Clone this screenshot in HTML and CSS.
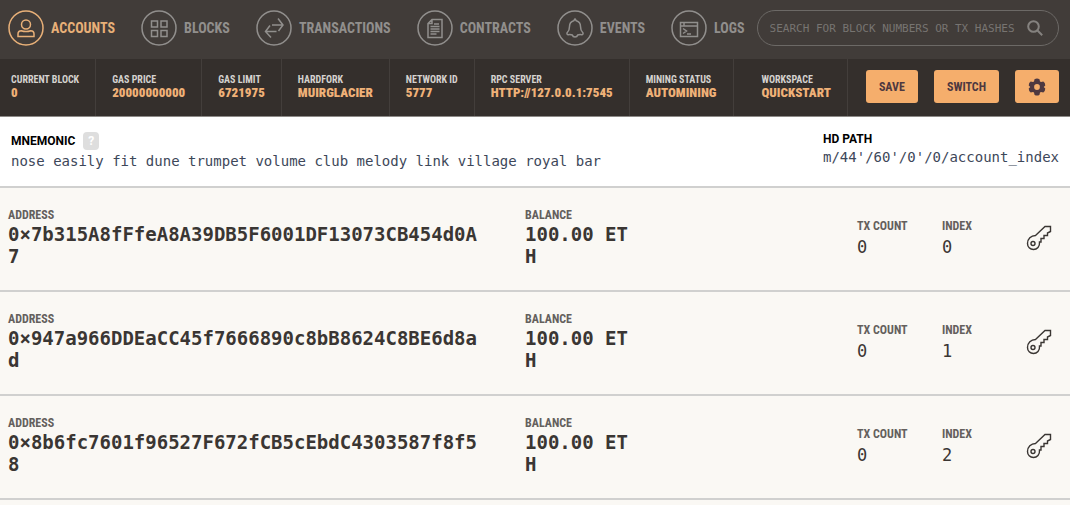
FILE: index.html
```html
<!DOCTYPE html>
<html lang="en">
<head>
    <meta charset="UTF-8">
    <meta name="viewport" content="width=device-width, initial-scale=1.0">
    <title>Accounts</title>
    <link rel="stylesheet" href="styles.css">
</head>
<body>

    <header>
        <div class="top-bar">
            <nav class="menu">
                <a href="#accounts" class="active">
                    <svg class="nav-icon" viewBox="0 0 36 36"><circle cx="18" cy="18" r="17"/><circle cx="18" cy="14.500" r="4.500"/><path d="M10 26.500V24c0-2 1.500-3.300 3.300-3.300 2.700 1 6.700 1 9.400 0 1.800 0 3.300 1.300 3.300 3.300v2.500z"/></svg>
                    <span>Accounts</span>
                </a>
                <a href="#blocks">
                    <svg class="nav-icon" viewBox="0 0 36 36"><circle cx="18" cy="18" r="17"/><path d="M10.500 11h6v6h-6zM20 11h6v6h-6zM10.500 20.500h6v6h-6zM20 20.500h6v6h-6z"/></svg>
                    <span>Blocks</span>
                </a>
                <a href="#transactions">
                    <svg class="nav-icon" viewBox="0 0 36 36"><circle cx="18" cy="18" r="17"/><path d="M16 15h11M22 8.500l5 6.500-4.500 6M20.500 21.500h-11M14 15.500l-4.500 6 5.500 6"/></svg>
                    <span>Transactions</span>
                </a>
                <a href="#contracts">
                    <svg class="nav-icon" viewBox="0 0 36 36"><circle cx="18" cy="18" r="17"/><path d="M15 9.500h10v18H11v-14zM15 9.500v4h-4M17 14h5M13.500 16.500h9M13.500 19h9M13.500 21.500h9M13.500 24h6"/></svg>
                    <span>Contracts</span>
                </a>
                <a href="#events">
                    <svg class="nav-icon" viewBox="0 0 36 36"><circle cx="18" cy="18" r="17"/><path d="M18 9l1.300 1.800c3 .9 4.200 2.700 4.200 5.700 0 3.500.5 4.500 2.200 6 .8 1 .3 2.200-1 2.200-1.400-.2-2.700-.2-4 .3-.7 2.700-4.700 2.700-5.400 0-1.300-.5-2.600-.5-4-.3-1.300 0-1.800-1.200-1-2.200 1.700-1.500 2.200-2.500 2.200-6 0-3 1.200-4.800 4.200-5.700z"/></svg>
                    <span>Events</span>
                </a>
                <a href="#logs">
                    <svg class="nav-icon" viewBox="0 0 36 36"><circle cx="18" cy="18" r="17"/><path d="M9.500 12.500h17v14h-17zM9.500 16h17M13 12.500V16M12 18.500l3.500 2.500-3.500 2.500M16 24h4"/></svg>
                    <span>Logs</span>
                </a>
            </nav>
            <form class="search">
                <input type="text" aria-label="Search" placeholder="SEARCH FOR BLOCK NUMBERS OR TX HASHES">
                <button type="submit" aria-label="Search">
                    <svg viewBox="0 0 16 16"><circle cx="6.500" cy="6.500" r="5.300"/><path d="M10.500 10.500l4.700 4.700"/></svg>
                </button>
            </form>
        </div>

        <div class="status-bar">
            <div class="status"><span>Current Block</span><b>0</b></div>
            <div class="status"><span>Gas Price</span><b>20000000000</b></div>
            <div class="status"><span>Gas Limit</span><b>6721975</b></div>
            <div class="status"><span>Hardfork</span><b>Muirglacier</b></div>
            <div class="status"><span>Network ID</span><b>5777</b></div>
            <div class="status"><span>RPC Server</span><b>http://127.0.0.1:7545</b></div>
            <div class="status"><span>Mining Status</span><b>Automining</b></div>
            <div class="status workspace"><span>Workspace</span><b>Quickstart</b></div>
            <div class="actions">
                <button type="button" class="btn">Save</button>
                <button type="button" class="btn">Switch</button>
                <button type="button" class="btn" aria-label="Settings">
                    <svg viewBox="0 0 20 20"><path fill-rule="evenodd" d="M7.200 1.500Q10-.5 12.800 1.500l.5 2.300 1.200.7 2.500-.6q2.200 1.400 2.200 4.400L17.500 10l1.700 1.700q0 3-2.200 4.400l-2.500-.6-1.200.7-.5 2.300q-2.800 2-5.600 0l-.5-2.300-1.200-.7-2.500.6q-2.200-1.400-2.200-4.400L2.500 10 .8 8.300q0-3 2.200-4.400l2.500.6 1.200-.7zM10 6.800a3.200 3.200 0 1 0 0 6.400 3.200 3.200 0 0 0 0-6.400z"/></svg>
                </button>
            </div>
        </div>
    </header>

    <main>
        <section class="mnemonic">
            <div class="phrase">
                <h2>MNEMONIC <button type="button" class="help">?</button></h2>
                <p>nose easily fit dune trumpet volume club melody link village royal bar</p>
            </div>
            <div>
                <h2>HD PATH</h2>
                <p>m/44'/60'/0'/0/account_index</p>
            </div>
        </section>

        <section class="account">
            <div class="address"><h3>Address</h3><p>0×7b315A8fFfeA8A39DB5F6001DF13073CB454d0A7</p></div>
            <div class="balance"><h3>Balance</h3><p>100.00 ETH</p></div>
            <div class="count"><h3>TX Count</h3><p>0</p></div>
            <div class="index"><h3>Index</h3><p>0</p></div>
            <button type="button" class="key" aria-label="Show keys">
                <svg viewBox="0 0 26 26"><path d="M9.500 10.500L19 1.500h5.500v5l-3 1.500v2.500h-3.500v3H15v3.500h-1.500c.5 4.500-2.500 7.500-6 7.500C4 24.500 1.500 22 1.500 18.500c0-4.500 3.500-8 8-8z"/><circle cx="7" cy="18.500" r="2"/></svg>
            </button>
        </section>
        <section class="account">
            <div class="address"><h3>Address</h3><p>0×947a966DDEaCC45f7666890c8bB8624C8BE6d8ad</p></div>
            <div class="balance"><h3>Balance</h3><p>100.00 ETH</p></div>
            <div class="count"><h3>TX Count</h3><p>0</p></div>
            <div class="index"><h3>Index</h3><p>1</p></div>
            <button type="button" class="key" aria-label="Show keys">
                <svg viewBox="0 0 26 26"><path d="M9.500 10.500L19 1.500h5.500v5l-3 1.500v2.500h-3.500v3H15v3.500h-1.500c.5 4.500-2.500 7.500-6 7.500C4 24.500 1.500 22 1.500 18.500c0-4.500 3.500-8 8-8z"/><circle cx="7" cy="18.500" r="2"/></svg>
            </button>
        </section>
        <section class="account">
            <div class="address"><h3>Address</h3><p>0×8b6fc7601f96527F672fCB5cEbdC4303587f8f58</p></div>
            <div class="balance"><h3>Balance</h3><p>100.00 ETH</p></div>
            <div class="count"><h3>TX Count</h3><p>0</p></div>
            <div class="index"><h3>Index</h3><p>2</p></div>
            <button type="button" class="key" aria-label="Show keys">
                <svg viewBox="0 0 26 26"><path d="M9.500 10.500L19 1.500h5.500v5l-3 1.500v2.500h-3.500v3H15v3.500h-1.500c.5 4.500-2.500 7.500-6 7.500C4 24.500 1.500 22 1.500 18.500c0-4.500 3.500-8 8-8z"/><circle cx="7" cy="18.500" r="2"/></svg>
            </button>
        </section>
    </main>

</body>
</html>
```
FILE: styles.css
```css
* {
    box-sizing: border-box;
}
body {
    margin: 0;
    background: #faf8f4;
    color: #3a3633;
    font-family: "Roboto Condensed", "Liberation Sans Narrow", Roboto, sans-serif;
}
h2, h3, p {
    margin: 0;
}
button {
    font-family: inherit;
    border: none;
    padding: 0;
    cursor: pointer;
}
svg {
    display: block;
}
.top-bar {
    display: flex;
    align-items: center;
    gap: 12px;
    height: 59px;
    padding: 0 11px 3px 8px;
    background: #413c39;
}
.menu {
    display: flex;
    gap: 26px;
}
.menu a {
    display: flex;
    align-items: center;
    gap: 7px;
    color: #918f8d;
    font-size: 14px;
    font-weight: bold;
    text-transform: uppercase;
    text-decoration: none;
}
.menu a.active {
    color: #e8b078;
}
.nav-icon {
    width: 36px;
    height: 36px;
    fill: none;
    stroke: currentColor;
    stroke-width: 1.5;
}
.search {
    display: flex;
    align-items: center;
    flex: 1;
    min-width: 0;
    height: 36px;
    padding: 0 15px 0 12px;
    border: 1px solid #6c6966;
    border-radius: 18px;
}
.search input {
    flex: 1;
    min-width: 0;
    padding: 0;
    border: none;
    outline: none;
    background: none;
    color: #aaa;
    font-family: "DejaVu Sans Mono", monospace;
    font-size: 11px;
}
.search input::placeholder {
    color: #777471;
    opacity: 1;
}
.search button {
    background: none;
}
.search svg {
    width: 16px;
    height: 16px;
    fill: none;
    stroke: #85827f;
    stroke-width: 2;
}
.status-bar {
    display: flex;
    height: 58px;
    padding-right: 11px;
    background: #342f2c;
    border-bottom: 1px solid #8d8a87;
}
.status {
    display: flex;
    flex-direction: column;
    justify-content: center;
    padding: 0 16px 2px;
    border-right: 1px solid #433e3b;
    font-size: 10px;
    font-weight: bold;
    line-height: 12px;
    color: #d5d2cf;
    text-transform: uppercase;
    white-space: nowrap;
}
.status:first-child {
    padding-left: 11px;
}
.status b {
    color: #efb178;
    font-size: 13px;
    line-height: 13px;
}
.status.workspace {
    padding-left: 28px;
}
.actions {
    display: flex;
    align-items: center;
    gap: 16px;
    margin-left: auto;
    padding-bottom: 2px;
}
.btn {
    height: 33px;
    padding: 0 13px;
    border-radius: 3px;
    background: #f5ae6c;
    color: #4e3840;
    font-size: 12px;
    font-weight: bold;
    text-transform: uppercase;
}
.btn svg {
    width: 18px;
    height: 18px;
    fill: #4e3840;
}
.mnemonic {
    display: flex;
    justify-content: space-between;
    height: 71px;
    padding: 13px 11px 0;
    background: #fff;
    border-bottom: 2px solid #d0d0cf;
}
.mnemonic h2 {
    display: flex;
    align-items: center;
    gap: 8px;
    color: #000;
    font-family: Roboto, sans-serif;
    font-size: 12px;
    font-weight: bold;
    line-height: 18px;
}
.mnemonic p {
    color: #3d4759;
    font-family: "DejaVu Sans Mono", monospace;
    font-size: 14px;
    line-height: 18px;
}
.phrase {
    padding-top: 2px;
}
.phrase p {
    padding-top: 2px;
}
.help {
    width: 16px;
    height: 18px;
    border-radius: 4px;
    background: #dedede;
    color: #fff;
    font-size: 12px;
    font-weight: bold;
}
.account {
    display: grid;
    grid-template-columns: 477px 110px 1fr 69px 68px 26px;
    column-gap: 16px;
    align-items: center;
    height: 104px;
    padding: 0 18px 3px 8px;
    border-bottom: 2px solid #d0d0cf;
}
.account h3 {
    color: #64605d;
    font-size: 12px;
    font-weight: bold;
    line-height: 15px;
    text-transform: uppercase;
}
.account p {
    font-family: "DejaVu Sans Mono", monospace;
    font-size: 17px;
    line-height: 26px;
}
.address p, .balance p {
    font-size: 19px;
    font-weight: bold;
    line-height: 22px;
    word-break: break-all;
}
.balance {
    margin-left: 24px;
    margin-right: -24px;
}
.count {
    grid-column: 4;
}
.count, .index {
    padding-top: 4px;
}
.key {
    background: none;
}
.key svg {
    width: 26px;
    height: 26px;
    fill: none;
    stroke: #3a3633;
    stroke-width: 1.4;
}
```
